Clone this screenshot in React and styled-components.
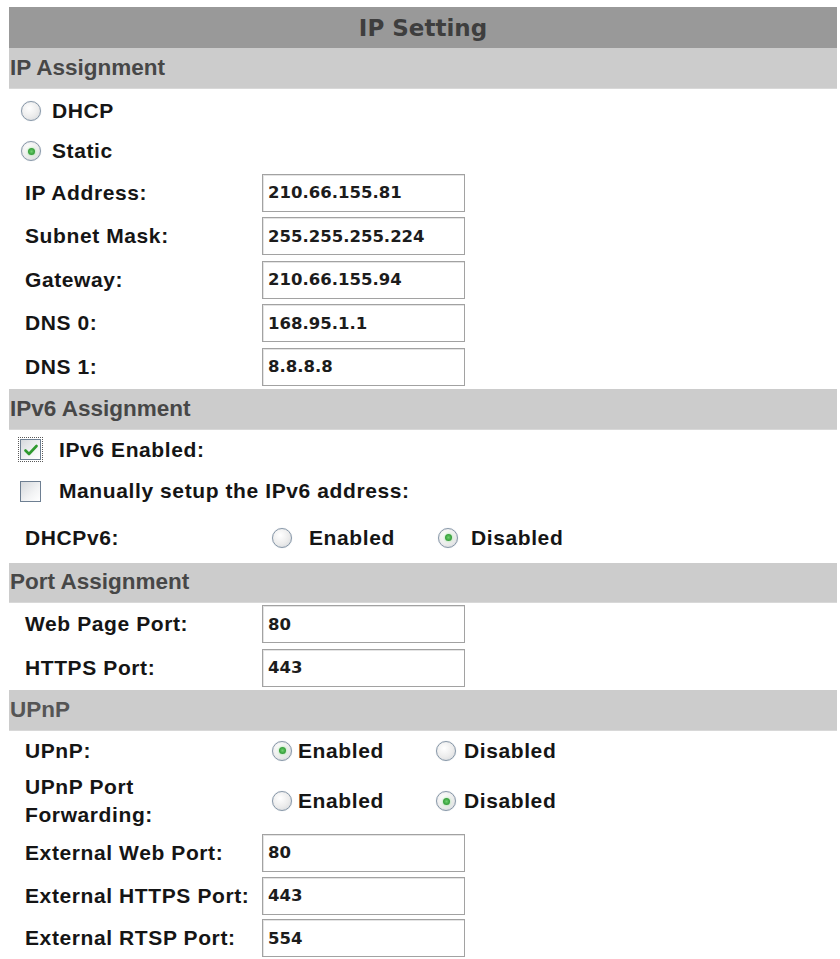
import React from "react";
import styled, { createGlobalStyle } from "styled-components";

const GlobalStyle = createGlobalStyle`
	body {
		margin: 0;
		background: #ffffff;
		font-family: "Liberation Sans", Arial, sans-serif;
		color: #111111;
	}
`;

const ipFields = [
	{ label: "IP Address:", value: "210.66.155.81" },
	{ label: "Subnet Mask:", value: "255.255.255.224" },
	{ label: "Gateway:", value: "210.66.155.94" },
	{ label: "DNS 0:", value: "168.95.1.1" },
	{ label: "DNS 1:", value: "8.8.8.8" },
];

const externalPorts = [
	{ label: "External Web Port:", value: "80" },
	{ label: "External HTTPS Port:", value: "443" },
	{ label: "External RTSP Port:", value: "554" },
];

const Radio = ({ checked, children, gap, width }) => (
	<Option $width={width} $gap={gap}>
		<RadioDot $checked={checked} />
		<span>{children}</span>
	</Option>
);

const Check = ({ checked, focused, children }) => (
	<CheckRow>
		<CheckBox $focused={focused}>
			{checked && (
				<svg width="14" height="12" viewBox="0 0 14 12">
					<path
						d="M1.5 6.5 L5 10 L12.5 2"
						fill="none"
						stroke="#2f9a2f"
						strokeWidth="2.6"
						strokeLinecap="round"
						strokeLinejoin="round"
					/>
				</svg>
			)}
		</CheckBox>
		<span>{children}</span>
	</CheckRow>
);

const FieldRow = ({ label, value, height }) => (
	<Row $height={height}>
		<Label>{label}</Label>
		<TextBox readOnly value={value} />
	</Row>
);

const App = () => {
	return (
		<Page>
			<GlobalStyle />
			<Title>IP Setting</Title>

			<SectionHeader>IP Assignment</SectionHeader>
			<RadioList>
				<RadioRow>
					<Radio gap={11}>DHCP</Radio>
				</RadioRow>
				<RadioRow>
					<Radio checked gap={11}>
						Static
					</Radio>
				</RadioRow>
			</RadioList>
			{ipFields.map((f) => (
				<FieldRow key={f.label} {...f} height={43.5} />
			))}

			<SectionHeader>IPv6 Assignment</SectionHeader>
			<Row $height={40}>
				<Check checked focused>
					IPv6 Enabled:
				</Check>
			</Row>
			<Row $height={43}>
				<Check>Manually setup the IPv6 address:</Check>
			</Row>
			<Row $height={50}>
				<Label>DHCPv6:</Label>
				<Options>
					<Radio width={166} gap={17}>
						Enabled
					</Radio>
					<Radio checked gap={13}>
						Disabled
					</Radio>
				</Options>
			</Row>

			<SectionHeader $height={40}>Port Assignment</SectionHeader>
			<FieldRow label="Web Page Port:" value="80" height={43.5} />
			<FieldRow label="HTTPS Port:" value="443" height={43.5} />

			<SectionHeader $light>UPnP</SectionHeader>
			<Row $height={40}>
				<Label>UPnP:</Label>
				<Options>
					<Radio checked width={164} gap={6}>
						Enabled
					</Radio>
					<Radio gap={8}>Disabled</Radio>
				</Options>
			</Row>
			<Row $height={61}>
				<Label>
					UPnP Port
					<br />
					Forwarding:
				</Label>
				<Options>
					<Radio width={164} gap={6}>
						Enabled
					</Radio>
					<Radio checked gap={8}>
						Disabled
					</Radio>
				</Options>
			</Row>
			{externalPorts.map((f) => (
				<FieldRow key={f.label} {...f} height={42.7} />
			))}
		</Page>
	);
};

export default App;

const Page = styled.div`
	width: 828px;
	padding: 7px 3px 0 9px;
`;

const Title = styled.div`
	height: 41px;
	background: #999999;
	display: flex;
	align-items: center;
	justify-content: center;
	font-family: "DejaVu Sans", Verdana, sans-serif;
	font-weight: bold;
	font-size: 23px;
	color: #3e3e3e;
`;

const SectionHeader = styled.div`
	height: ${({ $height }) => $height || 41}px;
	background: #cccccc;
	display: flex;
	align-items: center;
	padding-left: 1px;
	font-size: 22.5px;
	font-weight: bold;
	color: ${({ $light }) => ($light ? "#555555" : "#474747")};
	border-bottom: 1px solid #d8d8d8;
	box-sizing: border-box;
`;

const RadioList = styled.div`
	padding-top: 2px;
`;

const RadioRow = styled.div`
	height: 40px;
	display: flex;
	align-items: center;
	padding-left: 12px;
`;

const Row = styled.div`
	height: ${({ $height }) => $height}px;
	display: flex;
	align-items: center;
`;

const Label = styled.div`
	width: 253px;
	flex-shrink: 0;
	padding-left: 16px;
	box-sizing: border-box;
	font-size: 21px;
	font-weight: bold;
	letter-spacing: 0.6px;
	line-height: 28px;
	color: #151515;
`;

const TextBox = styled.input`
	width: 203px;
	height: 38px;
	box-sizing: border-box;
	border: 1px solid #a2a2a2;
	box-shadow: inset 1px 1px 0 #e4e4e4;
	padding: 0 5px;
	font-family: "DejaVu Sans", Verdana, sans-serif;
	font-weight: bold;
	font-size: 16.5px;
	color: #1c1c1c;
	background: #ffffff;
	outline: none;
`;

const Options = styled.div`
	display: flex;
	align-items: center;
	padding-left: 10px;
`;

const Option = styled.label`
	display: flex;
	align-items: center;
	width: ${({ $width }) => ($width ? `${$width}px` : "auto")};
	gap: ${({ $gap }) => $gap || 6}px;
	font-size: 21px;
	font-weight: bold;
	letter-spacing: 0.6px;
	color: #151515;
`;

const RadioDot = styled.span`
	width: 20px;
	height: 20px;
	border-radius: 50%;
	box-sizing: border-box;
	border: 1.5px solid #8797a8;
	background: radial-gradient(circle at 40% 35%, #ffffff 0%, #ececec 55%, #cfd3d8 100%);
	box-shadow: 0 0 1px #b9c3cc;
	display: flex;
	align-items: center;
	justify-content: center;
	flex-shrink: 0;
	&::after {
		content: "";
		display: ${({ $checked }) => ($checked ? "block" : "none")};
		width: 7px;
		height: 7px;
		border-radius: 50%;
		background: radial-gradient(circle, #6fd06f 0%, #2f9a35 70%);
		box-shadow: 0 0 3px #8fdc8f;
	}
`;

const CheckRow = styled.label`
	display: flex;
	align-items: center;
	gap: 18px;
	padding-left: 11px;
	font-size: 21px;
	font-weight: bold;
	letter-spacing: 0.6px;
	color: #151515;
`;

const CheckBox = styled.span`
	width: 21px;
	height: 21px;
	box-sizing: border-box;
	border: 1px solid #6e7f92;
	background: linear-gradient(135deg, #d6d9dd 0%, #f2f3f4 60%, #ffffff 100%);
	display: flex;
	align-items: center;
	justify-content: center;
	flex-shrink: 0;
	outline: ${({ $focused }) => ($focused ? "1px dotted #5a5a5a" : "none")};
	outline-offset: 1px;
`;
